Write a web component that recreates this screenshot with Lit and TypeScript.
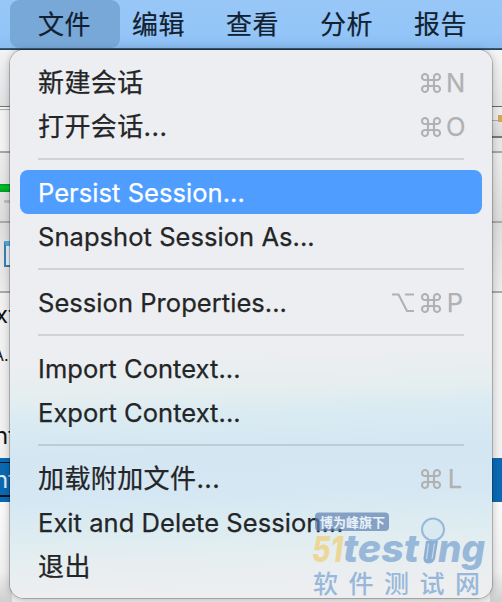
import { LitElement, html, css, svg, nothing } from "lit";
import { customElement, property } from "lit/decorators.js";

interface Entry {
  label: string;
  keys?: string;
  active?: boolean;
  cjk?: boolean;
}

const groups: Entry[][] = [
  [
    { label: "新建会话", keys: "⌘N", cjk: true },
    { label: "打开会话...", keys: "⌘O", cjk: true },
  ],
  [{ label: "Persist Session...", active: true }, { label: "Snapshot Session As..." }],
  [{ label: "Session Properties...", keys: "⌥⌘P" }],
  [{ label: "Import Context..." }, { label: "Export Context..." }],
  [
    { label: "加载附加文件...", keys: "⌘L", cjk: true },
    { label: "Exit and Delete Session..." },
    { label: "退出", cjk: true },
  ],
];

const commandIcon = svg`<svg width="20" height="20" viewBox="0 0 20 20" fill="none" stroke="currentColor" stroke-width="2.1">
  <path d="M7 7H13V13H7ZM7 7H4.1A3 3 0 1 1 7 4.1ZM13 7V4.1A3 3 0 1 1 15.9 7ZM13 13H15.9A3 3 0 1 1 13 15.9ZM7 13V15.9A3 3 0 1 1 4.1 13Z"/>
</svg>`;
const optionIcon = svg`<svg width="22" height="20" viewBox="0 0 22 20" fill="none" stroke="currentColor" stroke-width="2.1">
  <path d="M0 1.500H6.500L15 18H22M13 1.500H22"/>
</svg>`;

@customElement("menu-entry")
class MenuEntry extends LitElement {
  @property({ attribute: false }) entry!: Entry;

  static styles = css`
    :host { display: block; padding: 0 10px; }
    .row {
      display: flex; align-items: center; justify-content: space-between;
      box-sizing: border-box; height: 44px; padding: 2px 18px 0; border-radius: 8px; color: #232527;
      font: 400 25.5px/42px Inter, "Noto Sans CJK SC", sans-serif;
      letter-spacing: 0.05px; white-space: pre; -webkit-text-stroke: 0.25px currentColor;
    }
    .cjk { font-size: 26px; letter-spacing: 0.4px; }
    .active { background: #4e9dff; color: #fff; }
    .keys { display: flex; align-items: center; color: #afb1b3; }
    .icon { display: flex; margin-right: 5px; }
    .icon.wide { margin-right: 7px; }
    .letter { width: 18px; text-align: center; letter-spacing: 0; font-size: 25.5px; }
  `;

  render() {
    const { label, keys, active, cjk } = this.entry;
    return html`<div class="row ${active ? "active" : ""} ${cjk ? "cjk" : ""}">
      <span>${label}</span>
      ${keys
        ? html`<span class="keys">${[...keys].map((k) =>
            k === "⌘"
              ? html`<span class="icon">${commandIcon}</span>`
              : k === "⌥"
                ? html`<span class="icon wide">${optionIcon}</span>`
                : html`<span class="letter">${k}</span>`
          )}</span>`
        : nothing}
    </div>`;
  }
}

@customElement("brand-mark")
class BrandMark extends LitElement {
  static styles = css`
    :host { display: block; }
    svg { display: block; }
    .tag { font: 700 13px "Noto Sans CJK SC", sans-serif; fill: #e9f2f8; }
    .name { font: italic 800 38px Inter, sans-serif; }
    .gold { font-size: 36px; fill: #ecd798; }
    .blue { fill: #98b8da; }
    .cn { font: 500 25px "Noto Sans CJK SC", sans-serif; fill: #98b8da; }
  `;
  render() {
    return html`<svg width="180" height="92" viewBox="308 508 180 92">
      <rect x="315" y="512.500" width="74" height="18.500" rx="4" fill="#5f80b0" fill-opacity="0.7" />
      <text class="tag" x="320" y="526.500">博为峰旗下</text>
      <text class="name gold" x="312" y="562" textLength="31" lengthAdjust="spacingAndGlyphs">51</text>
      <text class="name blue" x="343" y="562" textLength="76" lengthAdjust="spacingAndGlyphs">test</text>
      <text class="name blue" x="438" y="562" textLength="47" lengthAdjust="spacingAndGlyphs">ng</text>
      <path d="M426 541H438L435 559Q433 563.500 428.500 563.500Q423 563 423.500 558Z" fill="#8daed3" />
      <path d="M428.500 543.500L426.500 559M434.500 543.500L432 559" stroke="#c4d9ea" stroke-width="1.200" />
      <circle cx="433" cy="529.500" r="11" fill="#d8e9f1" stroke="#98b8da" stroke-width="2" />
      <text class="cn" x="313" y="592.500" textLength="167">软件测试网</text>
    </svg>`;
  }
}

@customElement("app-root")
class AppRoot extends LitElement {
  static styles = css`
    :host { display: block; position: relative; width: 502px; height: 602px; overflow: hidden; background: #eee; }
    .bar {
      display: flex; height: 48px; padding-left: 10px; box-sizing: border-box;
      background: linear-gradient(#98c7f7, #93c5f8 70%, #8abcf0);
      font: 26px/46px "Noto Sans CJK SC", sans-serif; color: #12212f; letter-spacing: 0.5px;
      -webkit-text-stroke: 0.2px currentColor;
    }
    .title { box-sizing: border-box; width: 94px; padding-left: 12px; }
    .title.open { width: 110px; padding-left: 28px; background: #78a8d8; border-radius: 9px; }
    .edge { height: 2px; background: linear-gradient(#426380, #1c3850); }
    .desk { display: flex; justify-content: space-between; height: 552px; }
    .side { width: 12px; overflow: hidden; font: 400 24px/44px Inter, "Noto Sans CJK SC", sans-serif; color: #111; }
    .s1 { height: 56px; background: linear-gradient(#f3f3f4, #dfe0e2); }
    .s2 { height: 5px; background: linear-gradient(#747474 1px, #f4f4f4 1px 3px, #adadad 3px 4px, #eee 4px); }
    .s3 { height: 40px; background: #f3f3f3; }
    .s4, .s5 { display: flow-root; height: 70px; box-sizing: border-box; }
    .s4 { border-top: 2px solid #a6a6a6; background: linear-gradient(#ececec, #dcdcdc); }
    .s5 { border-top: 2px solid #aaa; background: linear-gradient(#dedede, #ebebeb); }
    .s6 { height: 165px; border-top: 2px solid #aaa; background: #f1f1f1; }
    .green { height: 8px; margin-top: 31px; background: linear-gradient(#009b20, #00c52e 40%, #009b20); }
    .grey { height: 3px; margin: 8px 0 0 4px; background: #bebebe; }
    .doc { box-sizing: border-box; height: 26px; margin: 18px 0 0 4px; border: 2px solid #3b7eae; border-top: 5px solid #55abdc; background: #e5f2fb; }
    .line { height: 44px; white-space: nowrap; text-indent: -5px; }
    .small { font-size: 16px; line-height: 36px; text-indent: -7px; height: 77px; }
    .nt { text-indent: -6px; }
    .sel { height: 44px; background: linear-gradient(#0b69b3 4px, #07131f 4px 5px, #0b69b3 5px 37px, #07131f 37px 39px, #0b69b3 39px); color: #e5eef6; }
    .right .sel { background: #0b69b3; }
    .foot { height: 100px; background: linear-gradient(#fafafa, #f0f0f0 70%, #cfcfcf); }
    .r1 { height: 56px; background: linear-gradient(#f5f5f5, #e4e4e4); }
    .r2 { height: 32px; background: linear-gradient(#686868 1px, #ececec 1px 14px, #b0b0b0 14px 15px, #e6e6e6 15px, #d8d8d8 30px, #777 30px); }
    .r3 { height: 13px; background: #e6e6e6; }
    .knob { width: 4px; height: 7px; margin-left: auto; transform: translateY(9px); background: #cfa65a; }
    .menu {
      position: absolute; left: 10px; top: 50px; width: 482px; height: 548px;
      box-sizing: border-box; padding-top: 10px; border-radius: 14px; overflow: hidden;
      box-shadow: 0 0 0 1px #0003, 0 1px 8px #0004;
      background: linear-gradient(178deg, #edeef1 0 310px, #e5eeef 348px, #daebf2 370px, #d4e6f2 410px, #d5e7f3 450px, #dcecf1 485px, #e6eef0 515px, #edeef0 548px);
    }
    .rule { height: 2px; margin: 10px 28px; background: #00142820; }
    .mark { position: absolute; left: 308px; top: 508px; }
  `;

  render() {
    return html`
      <div class="bar">
        ${["文件", "编辑", "查看", "分析", "报告"].map(
          (t, i) => html`<div class="title ${i === 0 ? "open" : ""}">${t}</div>`
        )}
      </div>
      <div class="edge"></div>
      <div class="desk">
        <div class="side">
          <div class="s1"></div><div class="s2"></div><div class="s3"></div>
          <div class="s4"><div class="green"></div><div class="grey"></div></div>
          <div class="s5"><div class="doc"></div></div>
          <div class="s6">
            <div class="line">xt</div><div class="line small">A..</div>
            <div class="line nt">nt</div>
          </div>
          <div class="sel"><div class="line nt">nt</div></div>
          <div class="foot"></div>
        </div>
        <div class="side right">
          <div class="r1"></div><div class="r2"><div class="knob"></div></div><div class="r3"></div>
          <div class="s4"></div><div class="s5"></div>
          <div class="s6"></div><div class="sel"></div><div class="foot"></div>
        </div>
      </div>
      <div class="menu">
        ${groups.map(
          (g, i) => html`${i ? html`<div class="rule"></div>` : nothing}
          ${g.map((e) => html`<menu-entry .entry=${e}></menu-entry>`)}`
        )}
      </div>
      <brand-mark class="mark"></brand-mark>
    `;
  }
}
